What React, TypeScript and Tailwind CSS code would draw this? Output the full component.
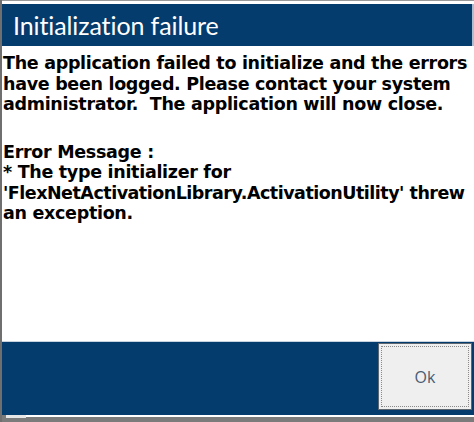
export default function App() {
  return (
    <div className="w-[474px] h-[422px] overflow-hidden bg-white flex flex-col border-l-2 border-[#6f6f6f]">
      {/* strip of the window behind */}
      <div className="h-[4px] shrink-0 border-t border-[#9a9a9a] bg-white" />

      {/* title bar */}
      <div className="h-[42px] shrink-0 bg-[#053c6e] border-r-2 border-[#aebdd0] flex items-center pl-[11px] pt-[1px]">
        <span className="text-white text-[25px] font-['Lato',sans-serif] tracking-[-0.1px]">
          Initialization failure
        </span>
      </div>

      {/* message */}
      <div className="flex-1 pl-[1px] pt-[7px] text-black font-bold text-[17.5px] leading-[20.5px] font-['DejaVu_Sans',sans-serif] tracking-[-0.3px] whitespace-nowrap">
        <p>The application failed to initialize and the errors</p>
        <p>have been logged. Please contact your system</p>
        <p>administrator.&nbsp; The application will now close.</p>
        <div className="h-[27px]" />
        <p>Error Message :</p>
        <p>* The type initializer for</p>
        <p className="tracking-[-0.5px]">'FlexNetActivationLibrary.ActivationUtility' threw</p>
        <p>an exception.</p>
      </div>

      {/* button bar */}
      <div className="h-[74px] shrink-0 bg-[#053c6e] border-t border-[#c9d3de] flex justify-end items-start pt-[1px] pr-[2px]">
        <button className="w-[94px] h-[67px] bg-[#efefef] border border-[#5e6670] p-[2px]">
          <div className="w-full h-full border border-dotted border-[#8a8a8a] flex items-center justify-center">
            <span className="text-[16px] text-[#4a5c72] font-['Open_Sans',sans-serif]">Ok</span>
          </div>
        </button>
      </div>

      {/* frame below */}
      <div className="h-[7px] shrink-0 bg-[#7b7b7b] flex items-start">
        <div className="ml-[4px] w-[20px] h-[3px] bg-[#e6e6e6]" />
        <div className="flex-1 h-[2px] bg-white" />
      </div>
    </div>
  )
}
